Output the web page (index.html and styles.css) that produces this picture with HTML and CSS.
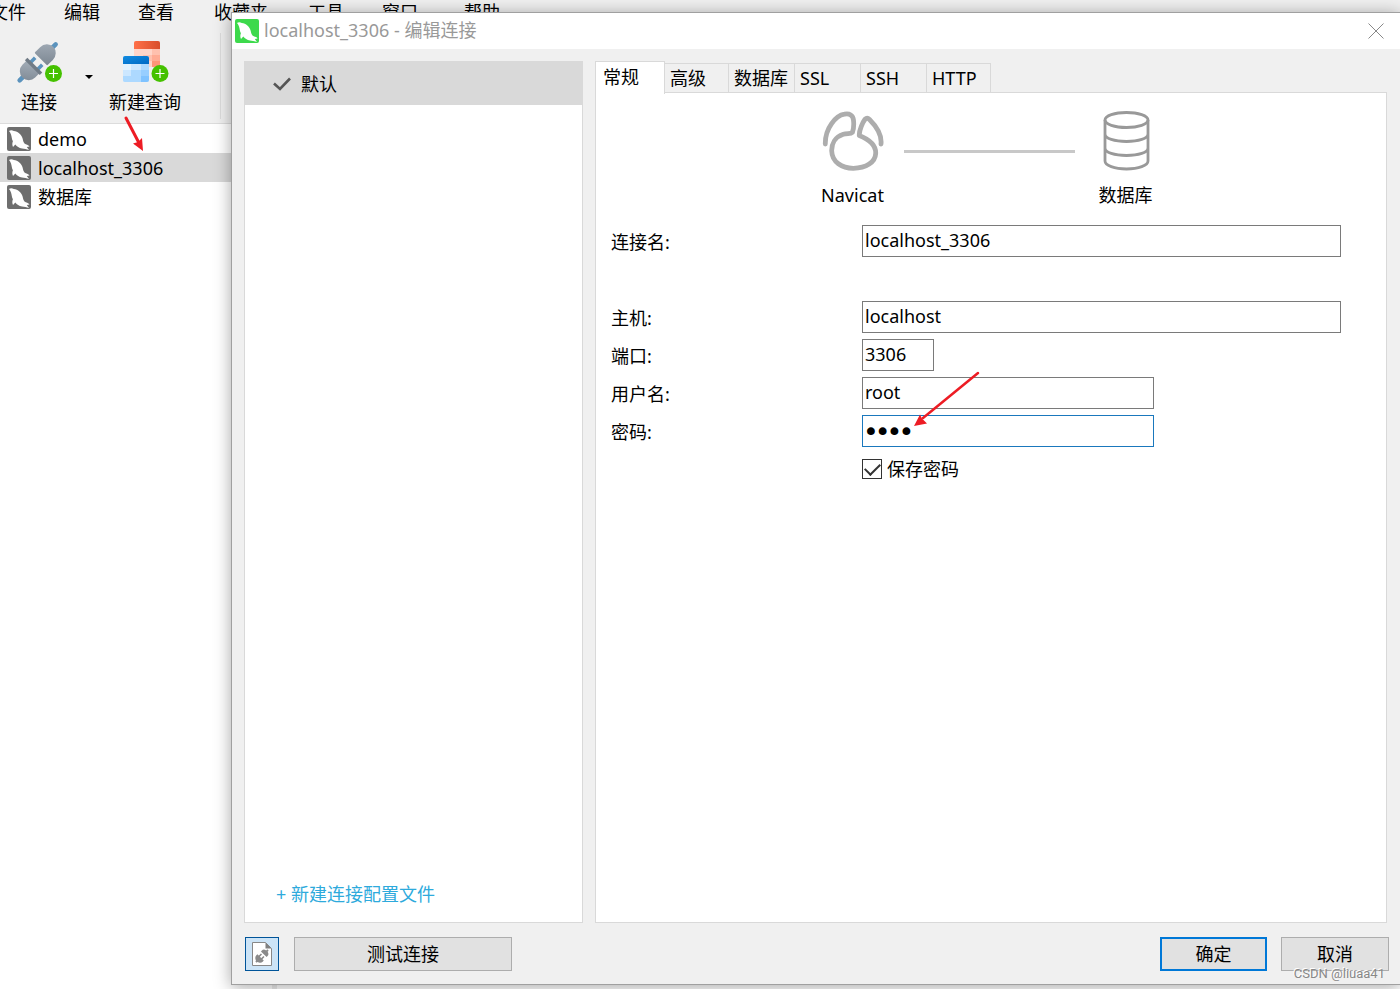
FILE: index.html
```html
<!DOCTYPE html>
<html lang="zh-CN">
<head>
<meta charset="utf-8">
<title>localhost_3306 - 编辑连接</title>
<link rel="stylesheet" href="styles.css">
</head>
<body>
<svg class="defs" aria-hidden="true">
  <defs>
    <symbol id="dolphin" viewBox="0 0 24 24">
      <rect width="24" height="24" rx="2"/>
      <path fill="#fff" d="M2 4C3.200 3 5 2.800 6.800 4 11 4.500 14.500 7.500 15.600 11.500c.600 2 .600 3.500 1.900 5 1.500 1.300 4 1.200 5 3l-2.700.500L22 23C19.500 22 17.500 22 15 21.500c-3-.600-5-1.800-6.700-4L6 20c-.900-2-.900-3.800-.100-5.800C4.500 11.800 4.900 9.600 4 7.400 3.500 6 2.800 5 2 4z"/>
    </symbol>
    <symbol id="plus" viewBox="0 0 18 18">
      <circle cx="9" cy="9" r="8.500" fill="#45c100"/>
      <path d="M9 4.500v9M4.500 9h9" stroke="#fff" stroke-width="1.200"/>
    </symbol>
    <linearGradient id="steel" x1="0" y1="0" x2="1" y2="1"><stop offset="0" stop-color="#a3adb8"/><stop offset="1" stop-color="#7c8792"/></linearGradient>
    <linearGradient id="red" x1="0" x2="1"><stop offset="0" stop-color="#ff7048"/><stop offset="1" stop-color="#d84e2b"/></linearGradient>
    <linearGradient id="blue" x1="0" x2="1" y2="1"><stop offset="0" stop-color="#118be0"/><stop offset="1" stop-color="#0069c4"/></linearGradient>
    <clipPath id="sheet"><rect width="26" height="26" rx="2"/></clipPath>
  </defs>
</svg>

<div class="app">
  <nav class="menubar">
    <span>文件</span><span>编辑</span><span>查看</span><span class="pad">收藏夹</span><span>工具</span><span>窗口</span><span class="help">帮助</span>
  </nav>
  <div class="toolbar">
    <button class="tool">
      <svg width="46" height="44" viewBox="0 0 46 44">
        <g transform="translate(22 22) rotate(45)">
          <path d="M0-25v5M0 20v6" stroke="#5b93bd" stroke-width="4.500" stroke-linecap="round"/>
          <path d="M-9-7v-5a9 9.500 0 0 1 18 0v7q0 1-1 1h-16q-1 0-1-1z" fill="url(#steel)"/>
          <path d="M-5-1v8M5-1v8" stroke="#5b93bd" stroke-width="3.600"/>
          <path d="M-9 7h18v6a9 9 0 0 1-18 0z" fill="url(#steel)"/>
          <path d="M-10.500 4.500h21v3.500h-21z" fill="#707b86"/>
        </g>
        <use href="#plus" x="28.500" y="24.500" width="18" height="18"/>
      </svg>
      <span>连接</span>
    </button>
    <span class="caret"></span>
    <button class="tool query">
      <svg width="48" height="44" viewBox="0 0 48 44">
        <g transform="translate(13 1)" clip-path="url(#sheet)">
          <path fill="#ffd5c9" d="M0 0h26v26H0z"/>
          <path fill="#ffc0ae" d="M18 8h8v6h-8zM9 14h9v6H9z"/>
          <path fill="#ffab94" d="M18 14h8v6h-8z"/><path fill="#ff9578" d="M18 20h8v6h-8z"/>
          <path fill="url(#red)" d="M0 0h26v8H0z"/>
        </g>
        <g transform="translate(2 16)" clip-path="url(#sheet)">
          <path fill="#cce7ff" d="M0 0h26v26H0z"/>
          <path fill="#e3f3ff" d="M0 8h8v6H0z"/>
          <path fill="#add9ff" d="M18 8h8v6h-8zM8 14h10v12H8zM0 20h8v6H0z"/>
          <path fill="#97ceff" d="M18 14h8v6h-8z"/><path fill="#80c3ff" d="M18 20h8v6h-8z"/>
          <path fill="url(#blue)" d="M0 0h26v8H0z"/>
        </g>
        <use href="#plus" x="30" y="24.500" width="18" height="18"/>
      </svg>
      <span>新建查询</span>
    </button>
    <span class="rule"></span>
  </div>
  <ul class="tree">
    <li><svg class="badge"><use href="#dolphin"/></svg>demo</li>
    <li class="selected"><svg class="badge"><use href="#dolphin"/></svg>localhost_3306</li>
    <li><svg class="badge"><use href="#dolphin"/></svg>数据库</li>
  </ul>
</div>

<section class="dialog" role="dialog" aria-labelledby="dialog-title">
  <header class="titlebar">
    <svg class="badge green"><use href="#dolphin"/></svg>
    <h1 id="dialog-title">localhost_3306 - 编辑连接</h1>
    <button class="close" aria-label="关闭"><svg width="16" height="16" viewBox="0 0 16 16"><path d="M.500.500l15 15M15.500.500l-15 15" stroke="#888"/></svg></button>
  </header>
  <div class="content">
    <aside class="profiles">
      <div class="profile">
        <svg width="18" height="14" viewBox="0 0 18 14"><path d="M1 6.500l6 5.500L17 1.500" fill="none" stroke="#555" stroke-width="2.600"/></svg>
        默认
      </div>
      <a class="new-profile" href="#">+ 新建连接配置文件</a>
    </aside>
    <div class="settings">
      <div class="tabs" role="tablist">
        <button role="tab" class="tab active" aria-selected="true">常规</button>
        <button role="tab" class="tab narrow">高级</button>
        <button role="tab" class="tab">数据库</button>
        <button role="tab" class="tab">SSL</button>
        <button role="tab" class="tab">SSH</button>
        <button role="tab" class="tab narrow">HTTP</button>
      </div>
      <div class="pane">
        <div class="route">
          <div class="node">
            <svg width="62" height="62" viewBox="0 0 62 62" fill="none" stroke="#adadad" stroke-width="4.800" stroke-linecap="round" stroke-linejoin="round">
              <path d="M3.300 33C3 17 14 4.500 22.500 3.200c5-1 8.500 1 9 6 .500 5 .500 8-1 12-2 2-5 .800-9.200 2.100C13 26 9.500 33 9.700 40 10 51 20 57.300 31.300 57.300c13 0 22-6.300 22.400-15C54 34 46 28 37.300 24.500 37 19 41 11 43 8.300c1.500-1.500 3-1.300 4.500.200C54 15 60 24 59 33"/>
            </svg>
            <span>Navicat</span>
          </div>
          <div class="wire"></div>
          <div class="node">
            <svg width="62" height="62" viewBox="0 0 62 62" fill="none" stroke="#999" stroke-width="2.800">
              <ellipse cx="31.500" cy="9" rx="21.500" ry="7.500"/>
              <path d="M10 9v41c0 4.500 9.500 8 21.500 8S53 54.500 53 50V9M10 23c0 4.500 9.500 7.500 21.500 7.500S53 27.500 53 23M10 37c0 4.500 9.500 7.500 21.500 7.500S53 41.500 53 37"/>
            </svg>
            <span>数据库</span>
          </div>
        </div>
        <form class="form">
          <label for="name">连接名:</label>
          <input id="name" class="field spaced" type="text" value="localhost_3306">
          <label for="host">主机:</label>
          <input id="host" class="field" type="text" value="localhost">
          <label for="port">端口:</label>
          <input id="port" class="field short" type="text" value="3306">
          <label for="user">用户名:</label>
          <input id="user" class="field medium" type="text" value="root">
          <label for="pass">密码:</label>
          <input id="pass" class="field medium focused" type="password" value="root">
          <label class="save"><input type="checkbox" checked>保存密码</label>
        </form>
      </div>
    </div>
  </div>
  <footer class="actions">
    <button class="icon-button" aria-label="连接配置文件">
      <svg width="20" height="24" viewBox="0 0 20 24">
        <path d="M.500.500h13l6 6v17H.500z" fill="#fff" stroke="#888"/>
        <path d="M13.500.500v6h6z" fill="#808080"/>
        <g transform="translate(10 14) rotate(45)" fill="#8a8a8a">
          <path d="M-4-2.500v-1a4 3.500 0 0 1 8 0v1zM-4.500 2h9v1.500a4.500 4 0 0 1-9 0zM-1-8.500h2v3h-2zM-1 6h2v2.500h-2zM-2.500-1h1.500v4h-1.500zM1-1h1.500v4H1z"/>
        </g>
      </svg>
    </button>
    <button class="button test">测试连接</button>
    <span class="spacer"></span>
    <button class="button primary">确定</button>
    <button class="button">取消</button>
  </footer>
</section>

<svg class="arrow arrow-list" width="24" height="38" viewBox="0 0 24 38"><path d="M3 3l13 25" stroke="#ed1c24" stroke-width="3" stroke-linecap="round"/><path d="M20 36L10 28.500l5-1.500 4-4z" fill="#ed1c24"/></svg>
<svg class="arrow arrow-password" width="70" height="58" viewBox="0 0 70 58"><path d="M66 3L11 48" stroke="#ed1c24" stroke-width="2.500" stroke-linecap="round"/><path d="M2 56l6-11.500 2 4 5 5z" fill="#ed1c24"/></svg>
<div class="watermark">CSDN @liuaa41</div>
</body>
</html>
```

FILE: styles.css
```css
* { box-sizing: border-box; }

body {
  margin: 0;
  height: 100vh;
  position: relative;
  overflow: hidden;
  background: #fff;
  color: #000;
  font: 18px/24px "Noto Sans", "Noto Sans CJK SC", sans-serif;
}

button, input { font: inherit; color: inherit; }
button { padding: 0; border: 0; background: none; }
svg { display: block; flex: none; }
.defs { position: absolute; width: 0; height: 0; }

/* Main window */
.app { display: flex; flex-direction: column; height: 100%; }
.menubar {
  display: flex;
  gap: 38px;
  margin-left: -10px;
  background: #f0f0f0;
  white-space: nowrap;
}
.menubar .pad { padding: 0 2px; }
.menubar .help { padding-left: 8px; }
.toolbar {
  display: flex;
  height: 100px;
  padding: 9px 0 4px;
  background: #f0f0f0;
  border-bottom: 1px solid #dcdcdc;
}
.tool {
  display: flex;
  flex-direction: column;
  align-items: center;
  gap: 6px;
  width: 78px;
  padding-top: 7px;
}
.caret {
  margin: 42px 15px 0 7px;
  width: 8px;
  height: 4px;
  background: #000;
  clip-path: polygon(0 0, 100% 0, 50% 100%);
}
.query { width: 74px; }
.rule { margin-left: 38px; border-left: 1px solid #dcdcdc; }
.tree {
  flex: 1;
  width: 277px;
  margin: 0;
  padding: 0;
  list-style: none;
  border-right: 5px solid #ececec;
}
.tree li {
  display: flex;
  align-items: center;
  gap: 7px;
  height: 29px;
  padding-left: 7px;
}
.tree .selected { background: #d9d9d9; }
.badge { width: 24px; height: 24px; fill: #6e6e6e; }
.badge.green { fill: #3dd94c; }

/* Dialog */
.dialog {
  position: absolute;
  inset: 12px 0 4px 231px;
  display: flex;
  flex-direction: column;
  border: 1px solid #a0a0a0;
  border-right: 0;
  background: #f0f0f0;
  box-shadow: 0 2px 16px rgba(0, 0, 0, .35);
}
.titlebar {
  display: flex;
  align-items: center;
  gap: 5px;
  height: 36px;
  padding: 0 16px 0 3px;
  background: #fff;
  color: #999;
}
.titlebar h1 { flex: 1; margin: 0; padding-bottom: 2px; font-size: 18px; font-weight: 400; }
.content {
  flex: 1;
  display: flex;
  gap: 12px;
  min-height: 0;
  padding: 12px 13px 0 12px;
}
.profiles {
  display: flex;
  flex-direction: column;
  justify-content: space-between;
  width: 339px;
  border: 1px solid #d9d9d9;
  background: #fff;
}
.profile {
  display: flex;
  align-items: center;
  gap: 10px;
  height: 43px;
  padding-left: 28px;
  background: #d9d9d9;
}
.new-profile {
  padding: 0 0 16px 31px;
  color: #2eaadc;
  text-decoration: none;
}
.settings { flex: 1; display: flex; flex-direction: column; }
.tabs { position: relative; display: flex; align-items: flex-end; height: 32px; }
.tab {
  width: 66px;
  height: 30px;
  padding: 0 0 2px 5px;
  border: 1px solid #d9d9d9;
  border-width: 1px 1px 0 0;
  text-align: left;
  white-space: nowrap;
}
.tab.narrow { width: 64px; }
.tab.active {
  width: 70px;
  height: 33px;
  margin-bottom: -1px;
  padding-left: 7px;
  border-left-width: 1px;
  background: #fff;
}
.pane {
  flex: 1;
  margin-top: -1px;
  padding: 18px 45px 0 15px;
  border: 1px solid #d9d9d9;
  background: #fff;
}
.route {
  display: grid;
  grid-template-columns: 102px 171px 102px;
  justify-content: center;
  padding-left: 26px;
  margin-bottom: 18px;
}
.node {
  display: flex;
  flex-direction: column;
  align-items: center;
  gap: 10px;
}
.wire { height: 3px; margin-top: 39px; background: #c8c8c8; }
.form {
  display: grid;
  grid-template-columns: 251px 1fr;
  row-gap: 6px;
  align-items: center;
}
.form label { padding-top: 2px; }
.field {
  width: 100%;
  height: 32px;
  margin: 0;
  padding: 0 2px 2px;
  border: 1px solid #7a7a7a;
  border-radius: 0;
  background: #fff;
  outline: 0;
}
.spaced { margin-bottom: 38px; }
.form label:first-child { margin-bottom: 38px; }
.short { width: 72px; }
.medium { width: 292px; }
.focused {
  padding-bottom: 0;
  border-color: #1a78bd;
  font: 20px/24px "DejaVu Sans", sans-serif;
  -webkit-text-stroke: 2px #000;
}
.form .save {
  grid-column: 2;
  display: flex;
  align-items: center;
  gap: 5px;
  height: 32px;
  padding: 0;
}
.save input {
  appearance: none;
  display: grid;
  place-items: center;
  width: 20px;
  height: 20px;
  margin: 0;
  border: 1px solid #333;
  background: #fff;
}
.save input:checked::after {
  content: "";
  width: 13px;
  height: 7px;
  margin-bottom: 4px;
  border: solid #333;
  border-width: 0 0 2px 2px;
  transform: rotate(-45deg);
}
.actions {
  display: flex;
  gap: 14px;
  padding: 14px 11px 13px 13px;
}
.button {
  width: 108px;
  height: 34px;
  border: 1px solid #adadad;
  background: #e1e1e1;
}
.button.test { width: 218px; margin-left: 1px; }
.button.primary { width: 107px; border: 2px solid #0078d7; }
.icon-button {
  display: grid;
  place-items: center;
  width: 34px;
  height: 34px;
  border: 1px solid #005499;
  background: #cce4f7;
}
.spacer { flex: 1; }

/* Annotations drawn over both windows */
.arrow { position: absolute; pointer-events: none; }
.arrow-list { left: 123px; top: 115px; }
.arrow-password { left: 912px; top: 370px; }
.watermark {
  position: absolute;
  right: 15px;
  bottom: 6px;
  color: #888;
  font: 13px/18px Roboto, sans-serif;
  text-shadow: -1px -1px 0 #fff;
}
```
